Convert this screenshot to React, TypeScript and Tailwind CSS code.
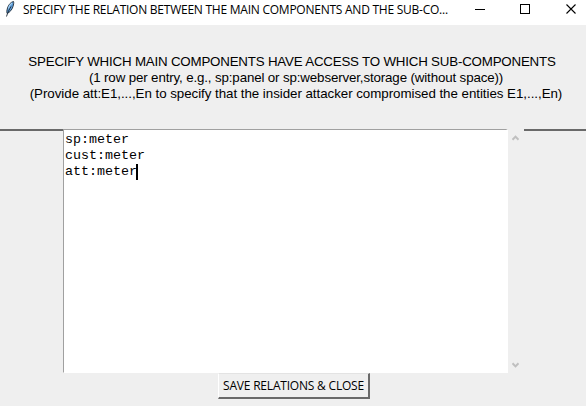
import React from "react";

function Feather() {
  return (
    <svg className="ml-[4px] h-[18px] w-[12px] shrink-0" viewBox="0 0 12 18">
      <path d="M9.5 1.500C7 2 4.500 4.500 3.500 8C2.800 10.500 2.500 12.500 3.200 13.500C5.500 12.500 8.300 9.500 9 6.500C9.600 4.500 10 2.500 9.500 1.500Z" fill="#5b9bd8" stroke="#202a34" strokeWidth="0.900" />
      <path d="M4.500 8.500C5.300 5.500 6.500 4 8 3" fill="none" stroke="#a9d3f5" strokeWidth="1.200" />
      <path d="M7 6.500C5.300 9.500 3.800 12 2.500 16.500" fill="none" stroke="#182430" strokeWidth="0.900" />
    </svg>
  );
}

function TitleBar() {
  return (
    <header className="flex h-[25px] items-start bg-white font-['Open_Sans','Noto_Sans',sans-serif]">
      <Feather />
      <h1 className="ml-[7px] w-[435px] whitespace-nowrap pt-px text-[12px] leading-[18px] font-normal tracking-[-0.245px]">
        SPECIFY THE RELATION BETWEEN THE MAIN COMPONENTS AND THE SUB-CO...
      </h1>
      <svg className="h-[20px] w-[128px] shrink-0" viewBox="0 0 128 20" fill="none" stroke="#000">
        <path d="M17 9.500H27M62.500 4.500H71.500V13.500H62.500Z" shapeRendering="crispEdges" />
        <path d="M108.500 4.500L117.500 13.500M117.500 4.500L108.500 13.500" strokeWidth="1.100" />
      </svg>
    </header>
  );
}

function Chevron({ down = false }: { down?: boolean }) {
  return (
    <svg className={down ? "h-[6px] w-[7px] rotate-180" : "h-[6px] w-[7px]"} viewBox="0 0 7 6">
      <path d="M0.500 4.800L3.500 1.600L6.500 4.800" fill="none" stroke="#bfbfbf" strokeWidth="2" />
    </svg>
  );
}

export default function App() {
  return (
    <div className="flex h-[406px] w-[586px] flex-col overflow-hidden bg-[#efefef] text-black">
      <TitleBar />
      <div className="flex h-[104px] flex-col items-center whitespace-nowrap pt-[29px] font-['Liberation_Sans',sans-serif] text-[13.333px] leading-[16px]">
        <p className="mr-[2px] tracking-[-0.200px]">SPECIFY WHICH MAIN COMPONENTS HAVE ACCESS TO WHICH SUB-COMPONENTS</p>
        <p className="ml-[6px] tracking-[-0.138px]">(1 row per entry, e.g., sp:panel or sp:webserver,storage (without space))</p>
        <p className="ml-[6px] tracking-[-0.040px]">(Provide att:E1,...,En to specify that the insider attacker compromised the entities E1,...,En)</p>
      </div>
      <main className="flex h-[244px]">
        <div className="w-[63px] border-t-2 border-[#696969]" />
        <div className="w-[445px] border-t border-r-2 border-b border-l border-t-[#a0a0a0] border-r-white border-b-white border-l-[#a0a0a0] bg-white pt-[2px] pl-[1px] font-['Liberation_Mono',monospace] text-[13.333px] leading-[16px]">
          <p>sp:meter</p>
          <p>cust:meter</p>
          <p className="flex">att:meter<span className="-ml-px h-[16px] w-[2px] bg-black" /></p>
        </div>
        <div className="flex w-[16px] flex-col items-start justify-between pt-[6px] pb-[5px] pl-[4px]">
          <Chevron />
          <Chevron down />
        </div>
        <div className="flex-1 border-t-2 border-[#696969]" />
      </main>
      <button className="ml-[218px] flex h-[26px] w-[152px] items-center justify-center border-t border-r-2 border-b-2 border-l border-t-[#e3e3e3] border-r-[#696969] border-b-[#696969] border-l-white bg-[#efefef] font-['Open_Sans','Noto_Sans',sans-serif] text-[12px] leading-[16px] tracking-[-0.200px] whitespace-nowrap">
        SAVE RELATIONS &amp; CLOSE
      </button>
    </div>
  );
}
